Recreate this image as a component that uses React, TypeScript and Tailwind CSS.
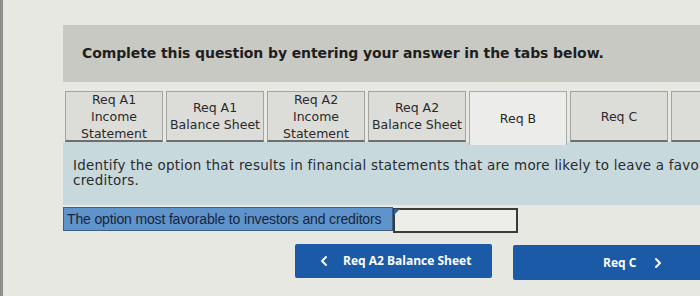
import { ChevronLeft, ChevronRight } from 'lucide-react';

const tabs = [
  { label: ['Req A1', 'Income', 'Statement'] },
  { label: ['Req A1', 'Balance Sheet'] },
  { label: ['Req A2', 'Income', 'Statement'] },
  { label: ['Req A2', 'Balance Sheet'] },
  { label: ['Req B'], active: true },
  { label: ['Req C'] },
  { label: [''] },
];

export default function App() {
  return (
    <div className="w-[700px] h-[296px] overflow-hidden bg-[#e8e8e3] border-l-[3px] border-[#8e8e8c] flex">
      <div className="ml-[60px] pt-[25px] w-[680px] shrink-0 flex flex-col">
        {/* instructions bar */}
        <div className="h-[57px] bg-[#c9c9c4] flex items-center pl-[19px] text-[14px] font-bold text-[#1e1e1e] [font-family:'DejaVu_Sans',sans-serif] tracking-[-0.1px]">
          Complete this question by entering your answer in the tabs below.
        </div>

        {/* tabs */}
        <div className="mt-[9px] flex gap-[3px] pl-[2px] h-[51px] items-stretch relative z-10 [font-family:'DejaVu_Sans',sans-serif] text-[12.5px] text-[#2a2a2a] leading-[17px]">
          {tabs.map((t, i) => (
            <div
              key={i}
              className={
                t.active
                  ? 'w-[98px] shrink-0 bg-[#ececea] border border-b-0 border-[#a9a9a6] flex flex-col items-center justify-center -mb-[3px]'
                  : 'w-[98px] shrink-0 bg-[#dcdcd8] border border-[#a3a3a0] border-b-2 border-b-[#6f6f6d] flex flex-col items-center justify-center text-center'
              }
            >
              {t.label.map((l, j) => (
                <span key={j} className="whitespace-nowrap">{l}</span>
              ))}
            </div>
          ))}
        </div>

        {/* question */}
        <div className="h-[63px] bg-[#c7d9dd] pl-[10px] pt-[16px] text-[13.45px] leading-[15px] tracking-[0.25px] text-[#2b2b2b] [font-family:'DejaVu_Sans',sans-serif] whitespace-nowrap overflow-hidden">
          Identify the option that results in financial statements that are more likely to leave a favorable impression on investors and
          <br />
          creditors.
        </div>

        {/* answer row */}
        <div className="mt-[2px] flex items-start">
          <div className="w-[330px] h-[24px] bg-[#5f93cc] border border-[#3d5f86] pl-[3px] flex items-center text-[14px] text-[#17253a] [font-family:'Liberation_Sans',sans-serif] tracking-[-0.15px]">
            The option most favorable to investors and creditors
          </div>
          <div className="relative mt-[1px] w-[125px] h-[25px] bg-[#eeeee9] border-2 border-[#3b3b3b]">
            <div className="absolute -left-[1px] -top-[1px] w-0 h-0 border-t-[6px] border-t-[#2f63a8] border-r-[6px] border-r-transparent" />
          </div>
        </div>

        {/* navigation */}
        <div className="mt-[11px] flex gap-[21px] pl-[232px] items-start [font-family:'Open_Sans',sans-serif] font-bold text-[12px] text-white">
          <div className="w-[197px] h-[34px] bg-[#1b5aa7] rounded-[2px] flex items-center pl-[21px] gap-[11px] shrink-0">
            <ChevronLeft size={16} strokeWidth={3} />
            <span>Req A2 Balance Sheet</span>
          </div>
          <div className="mt-[1px] w-[200px] h-[35px] bg-[#1b5aa7] rounded-[2px] flex items-center pl-[90px] gap-[14px] shrink-0">
            <span>Req C</span>
            <ChevronRight size={16} strokeWidth={3} />
          </div>
        </div>
      </div>
    </div>
  );
}
